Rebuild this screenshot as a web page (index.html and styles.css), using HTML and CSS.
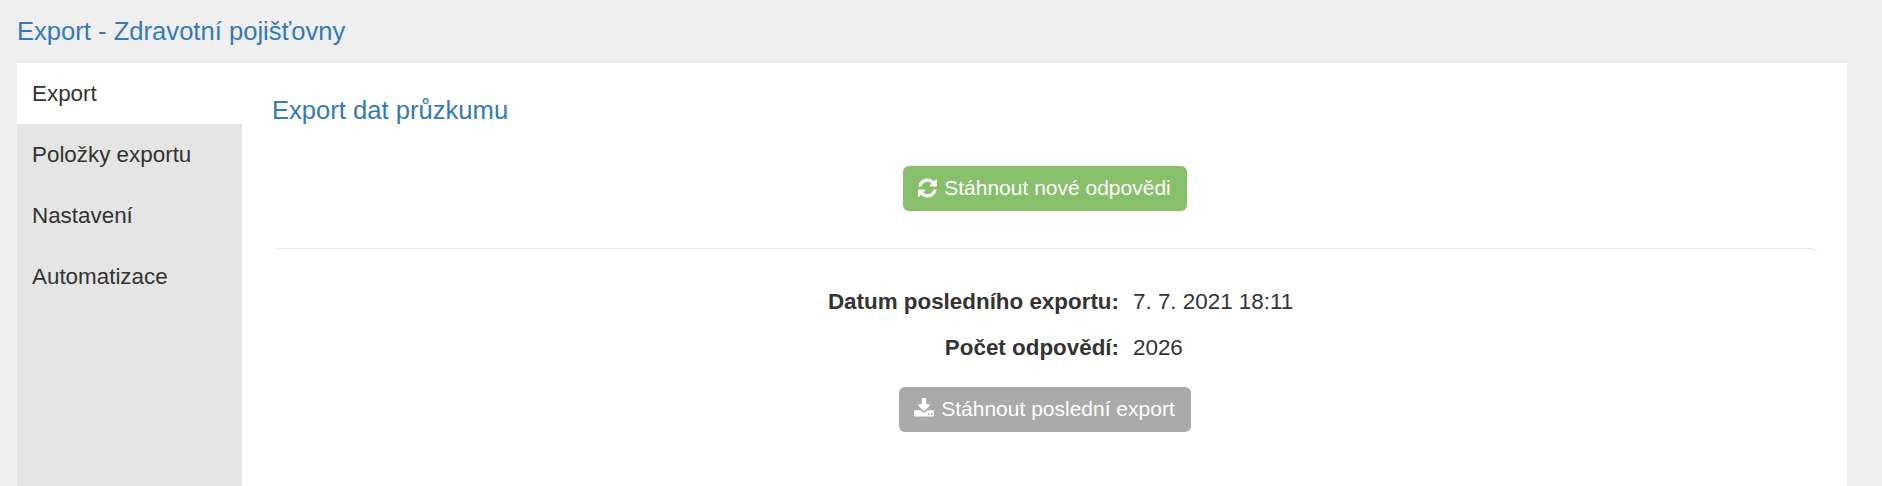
FILE: index.html
```html
<!DOCTYPE html>
<html lang="cs">
<head>
<meta charset="utf-8">
<title>Export - Zdravotní pojišťovny</title>
<link rel="stylesheet" href="styles.css">
</head>
<body>
<div class="page">
  <h1 class="page-title">Export - Zdravotní pojišťovny</h1>
  <div class="card">
    <nav class="sidebar">
      <a class="tab tab-active">Export</a>
      <a class="tab">Položky exportu</a>
      <a class="tab">Nastavení</a>
      <a class="tab">Automatizace</a>
    </nav>
    <main class="content">
      <h2 class="section-title">Export dat průzkumu</h2>
      <div class="actions actions-top">
        <button class="btn btn-green">
          <svg class="icon icon-refresh" viewBox="0 0 1536 1792"><path d="M1511 1056q0 5-1 7-64 268-268 434.5t-478 166.5q-146 0-282.5-55t-243.5-157l-129 129q-19 19-45 19t-45-19-19-45v-448q0-26 19-45t45-19h448q26 0 45 19t19 45-19 45l-137 137q71 66 161 102t187 36q134 0 250-65t186-179q11-17 53-117 8-23 30-23h192q13 0 22.5 9.5t9.5 22.5zm25-800v448q0 26-19 45t-45 19h-448q-26 0-45-19t-19-45 19-45l138-138q-148-137-349-137-134 0-250 65t-186 179q-11 17-53 117-8 23-30 23h-199q-13 0-22.5-9.5t-9.5-22.5v-7q65-268 270-434.5t480-166.5q146 0 284 55.5t245 156.5l130-129q19-19 45-19t45 19 19 45z"/></svg>
          Stáhnout nové odpovědi
        </button>
      </div>
      <div class="divider"></div>
      <dl class="info">
        <dt>Datum posledního exportu:</dt><dd>7. 7. 2021 18:11</dd>
        <dt>Počet odpovědí:</dt><dd>2026</dd>
      </dl>
      <div class="actions actions-bottom">
        <button class="btn btn-gray">
          <svg class="icon icon-download" viewBox="64 0 1664 1792"><path d="M1344 1344q0-26-19-45t-45-19-45 19-19 45 19 45 45 19 45-19 19-45zm256 0q0-26-19-45t-45-19-45 19-19 45 19 45 45 19 45-19 19-45zm128-224v320q0 40-28 68t-68 28h-1472q-40 0-68-28t-28-68v-320q0-40 28-68t68-28h465l135 136q58 56 136 56t136-56l136-136h464q40 0 68 28t28 68zm-325-569q17 41-14 70l-448 448q-18 19-45 19t-45-19l-448-448q-31-29-14-70 17-39 59-39h256v-448q0-26 19-45t45-19h256q26 0 45 19t19 45v448h256q42 0 59 39z"/></svg>
          Stáhnout poslední export
        </button>
      </div>
    </main>
  </div>
</div>
</body>
</html>
```
FILE: styles.css
```css
html, body {
  margin: 0;
  height: 100%;
  overflow: hidden;
}
body {
  background: #efefef;
  color: #333;
  font-family: "Liberation Sans", Arial, sans-serif;
  font-size: 22.4px;
  line-height: 32px;
}
.page {
  display: flex;
  flex-direction: column;
  height: 100%;
  padding: 0 35px 0 17px;
  box-sizing: border-box;
}
.page-title {
  margin: 0;
  height: 63px;
  padding-top: 14px;
  box-sizing: border-box;
  font-size: 25.6px;
  font-weight: 400;
  line-height: 34px;
  color: #337ab7;
}
.card {
  flex: 1;
  display: flex;
  background: #fff;
}
.sidebar {
  width: 225px;
  flex: none;
  display: flex;
  flex-direction: column;
  background: #e5e5e5;
}
.tab {
  height: 61px;
  padding: 16px 15px 0;
  box-sizing: border-box;
  font-size: 22.4px;
  line-height: 30px;
  color: #333;
}
.tab-active {
  background: #fff;
}
.content {
  flex: 1;
  padding: 0 29px 0 30px;
}
.section-title {
  margin: 30px 0 0;
  font-size: 25.6px;
  font-weight: 400;
  line-height: 34px;
  color: #337ab7;
}
.actions {
  display: flex;
  justify-content: center;
}
.actions-top {
  margin-top: 39px;
}
.actions-bottom {
  margin-top: 23px;
}
.btn {
  display: flex;
  align-items: center;
  gap: 7px;
  height: 45px;
  padding: 0 16px 2px 15px;
  border: 0;
  border-radius: 6px;
  font-family: inherit;
  font-size: 21px;
  color: #fff;
}
.btn-green {
  background: #88bf6a;
}
.btn-gray {
  background: #aaa;
}
.icon {
  fill: currentColor;
  flex: none;
}
.icon-refresh {
  width: 19px;
  height: 22px;
}
.icon-download {
  width: 20px;
  height: 21.5px;
}
.divider {
  margin-top: 37px;
  height: 12px;
  border-top: 1px solid #e7e7e7;
  border-radius: 10px;
}
.info {
  display: grid;
  grid-template-columns: 847px 1fr;
  column-gap: 14px;
  row-gap: 14px;
  margin: 25px 0 0;
}
.info dt {
  font-weight: 700;
  text-align: right;
}
.info dd {
  margin: 0;
}
```
